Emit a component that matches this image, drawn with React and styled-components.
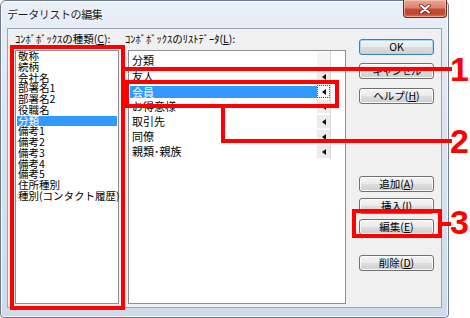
import React from 'react';
import styled, { createGlobalStyle } from 'styled-components';

const GlobalStyle = createGlobalStyle`
  html, body {
    margin: 0;
    padding: 0;
    background: #ffffff;
  }
  body {
    font-family: "Noto Sans CJK JP", "Noto Sans", sans-serif;
    overflow: hidden;
  }
`;

const Stage = styled.div`
  position: relative;
  width: 470px;
  height: 318px;
`;

const Window = styled.div`
  box-sizing: border-box;
  width: 449px;
  height: 318px;
  display: flex;
  flex-direction: column;
  padding: 0 6px 9px;
  border: 1px solid #6f7c8d;
  border-radius: 6px 6px 4px 4px;
  background: linear-gradient(180deg, #e9eff7 0%, #dbe5f1 35%, #cfdbea 100%);
  box-shadow: inset 0 0 0 1px rgba(255, 255, 255, 0.75);
`;

const TitleBar = styled.div`
  height: 27px;
  margin-right: -5px;
  display: flex;
  justify-content: space-between;
  align-items: flex-start;
`;

const Title = styled.div`
  font-size: 11px;
  letter-spacing: -0.4px;
  line-height: 27px;
  color: #1a1a1a;
  text-shadow: 0 0 6px #ffffff, 0 0 2px #ffffff;
`;

const CloseButton = styled.div`
  box-sizing: border-box;
  width: 44px;
  height: 18px;
  margin-top: -1px;
  display: flex;
  align-items: center;
  justify-content: center;
  border: 1px solid #6b2a22;
  border-top: none;
  border-radius: 0 0 4px 4px;
  background: linear-gradient(180deg, #e9a797 0%, #dc8270 45%, #c74a35 55%, #c24530 80%, #d8735c 100%);
  box-shadow: inset 0 0 0 1px rgba(255, 210, 200, 0.55);
`;

const Client = styled.div`
  flex: 1;
  display: flex;
  padding: 4px 7px 3px;
  border: 1px solid #97a5b7;
  background: #f0f0f0;
`;

const Column = styled.div`
  display: flex;
  flex-direction: column;
  width: ${(p) => p.$width}px;
  margin-left: ${(p) => p.$offset || 0}px;
`;

const Label = styled.div`
  height: 12px;
  margin-bottom: 5px;
  font-size: 10.5px;
  line-height: 12px;
  color: #000;
  white-space: nowrap;

  u {
    text-decoration: underline;
    text-underline-offset: 1px;
  }
`;

const ListBox = styled.div`
  flex: 1;
  margin-left: ${(p) => p.$indent || 0}px;
  padding: 0 1px;
  border: 1px solid #8c8e94;
  background: #ffffff;
`;

const KindItem = styled.div`
  height: 10.75px;
  padding-left: 1px;
  font-size: 10.5px;
  line-height: 10.75px;
  white-space: nowrap;
  color: ${(p) => (p.$selected ? '#ffffff' : '#000000')};
  background: ${(p) => (p.$selected ? '#3399ff' : 'transparent')};
`;

const DataRows = styled.div`
  width: 201px;
  margin-left: -1px;
  border-right: 1px solid #d6d6d6;
`;

const DataRow = styled.div`
  display: flex;
  height: ${(p) => (p.$head ? 18 : 15)}px;
`;

const DataCell = styled.div`
  flex: 1;
  margin: ${(p) => (p.$selected ? '2px 0 1px 1px' : '0 0 0 1px')};
  padding-left: 2px;
  font-size: 11px;
  line-height: ${(p) => (p.$selected ? 12 : p.$head ? 18 : 15)}px;
  white-space: nowrap;
  color: ${(p) => (p.$selected ? '#ffffff' : '#000000')};
  background: ${(p) => (p.$selected ? '#3399ff' : 'transparent')};
`;

const ArrowCell = styled.div`
  box-sizing: border-box;
  width: 13px;
  margin: 1px 0;
  display: flex;
  align-items: center;
  justify-content: center;
  background: ${(p) => (p.$blank ? '#f5f5f5' : p.$focus ? '#f7f7f7' : '#ececec')};
  border: ${(p) => (p.$focus ? '1px dotted #4a4a4a' : 'none')};
`;

const ButtonColumn = styled.div`
  display: flex;
  flex-direction: column;
  width: 75px;
  margin-left: 13px;
`;

const Button = styled.div`
  box-sizing: border-box;
  height: 16px;
  margin-top: ${(p) => p.$gap}px;
  display: flex;
  align-items: center;
  justify-content: center;
  border: 1px solid ${(p) => (p.$default ? '#3c7fb1' : '#707070')};
  border-radius: 3px;
  background: linear-gradient(180deg, #f4f4f4 0%, #ebebeb 48%, #dddddd 52%, #cfcfcf 100%);
  box-shadow: inset 0 0 0 1px ${(p) => (p.$default ? '#a6dcf6' : 'rgba(255, 255, 255, 0.8)')};
  font-size: 10.5px;
  line-height: 14px;
  letter-spacing: ${(p) => p.$tight || 0}px;
  color: #000;
  white-space: nowrap;

  u {
    text-decoration: underline;
    text-underline-offset: 1px;
  }
`;

const Mark = styled.div`
  position: absolute;
  box-sizing: border-box;
  left: ${(p) => p.$x}px;
  top: ${(p) => p.$y}px;
  width: ${(p) => p.$w}px;
  height: ${(p) => p.$h}px;
  border: 4px solid #ff0000;
`;

const Lead = styled.div`
  position: absolute;
  left: ${(p) => p.$x}px;
  top: ${(p) => p.$y}px;
  width: ${(p) => p.$w}px;
  height: ${(p) => p.$h}px;
  background: #ff0000;
`;

const Num = styled.div`
  position: absolute;
  left: 450px;
  top: ${(p) => p.$y}px;
  font-family: "Liberation Sans", Arial, sans-serif;
  font-weight: 700;
  font-size: 34px;
  line-height: 34px;
  color: #ff0000;
`;

const kinds = [
  '敬称', '続柄', '会社名', '部署名1', '部署名2', '役職名', '分類',
  '備考1', '備考2', '備考3', '備考4', '備考5', '住所種別', '種別(コンタクト履歴)',
];

const listData = ['友人', '会員', 'お得意様', '取引先', '同僚', '親類･親族'];

const CloseGlyph = () => (
  <svg width="12" height="10" viewBox="0 0 12 10">
    <path d="M2 1.5 L10 8.5 M10 1.5 L2 8.5" stroke="#6a2118" strokeWidth="3.6" strokeLinecap="round" />
    <path d="M2 1.5 L10 8.5 M10 1.5 L2 8.5" stroke="#ffffff" strokeWidth="2" strokeLinecap="round" />
  </svg>
);

const LeftArrow = () => (
  <svg width="4" height="6" viewBox="0 0 4 6">
    <polygon points="4,0 4,6 0,3" fill="#111" />
  </svg>
);

export default function App() {
  return (
    <Stage>
      <GlobalStyle />
      <Window>
        <TitleBar>
          <Title>データリストの編集</Title>
          <CloseButton>
            <CloseGlyph />
          </CloseButton>
        </TitleBar>
        <Client>
          <Column $width={104}>
            <Label>ｺﾝﾎﾞﾎﾞｯｸｽの種類(<u>C</u>):</Label>
            <ListBox>
              {kinds.map((k) => (
                <KindItem key={k} $selected={k === '分類'}>{k}</KindItem>
              ))}
            </ListBox>
          </Column>
          <Column $width={221} $offset={6}>
            <Label>ｺﾝﾎﾞﾎﾞｯｸｽのﾘｽﾄﾃﾞｰﾀ(<u>L</u>):</Label>
            <ListBox $indent={3}>
              <DataRows>
                <DataRow $head>
                  <DataCell $head>分類</DataCell>
                  <ArrowCell $blank />
                </DataRow>
                {listData.map((d) => (
                  <DataRow key={d}>
                    <DataCell $selected={d === '会員'}>{d}</DataCell>
                    <ArrowCell $focus={d === '会員'}>
                      <LeftArrow />
                    </ArrowCell>
                  </DataRow>
                ))}
              </DataRows>
            </ListBox>
          </Column>
          <ButtonColumn>
            <Button $gap={6} $default>OK</Button>
            <Button $gap={8} $tight={-0.8}>キャンセル</Button>
            <Button $gap={9}>ヘルプ(<u>H</u>)</Button>
            <Button $gap={72}>追加(<u>A</u>)</Button>
            <Button $gap={6}>挿入(<u>I</u>)</Button>
            <Button $gap={5}>編集(<u>E</u>)</Button>
            <Button $gap={20}>削除(<u>D</u>)</Button>
          </ButtonColumn>
        </Client>
      </Window>

      <Mark $x={10} $y={45} $w={115} $h={265} />
      <Lead $x={121} $y={67} $w={331} $h={4} />
      <Num $y={52}>1</Num>

      <Mark $x={125} $y={80} $w={214} $h={28} />
      <Lead $x={221} $y={104} $w={4} $h={39} />
      <Lead $x={221} $y={139} $w={231} $h={4} />
      <Num $y={124}>2</Num>

      <Mark $x={352} $y={209} $w={90} $h={29} />
      <Lead $x={440} $y={222} $w={11} $h={4} />
      <Num $y={205}>3</Num>
    </Stage>
  );
}
